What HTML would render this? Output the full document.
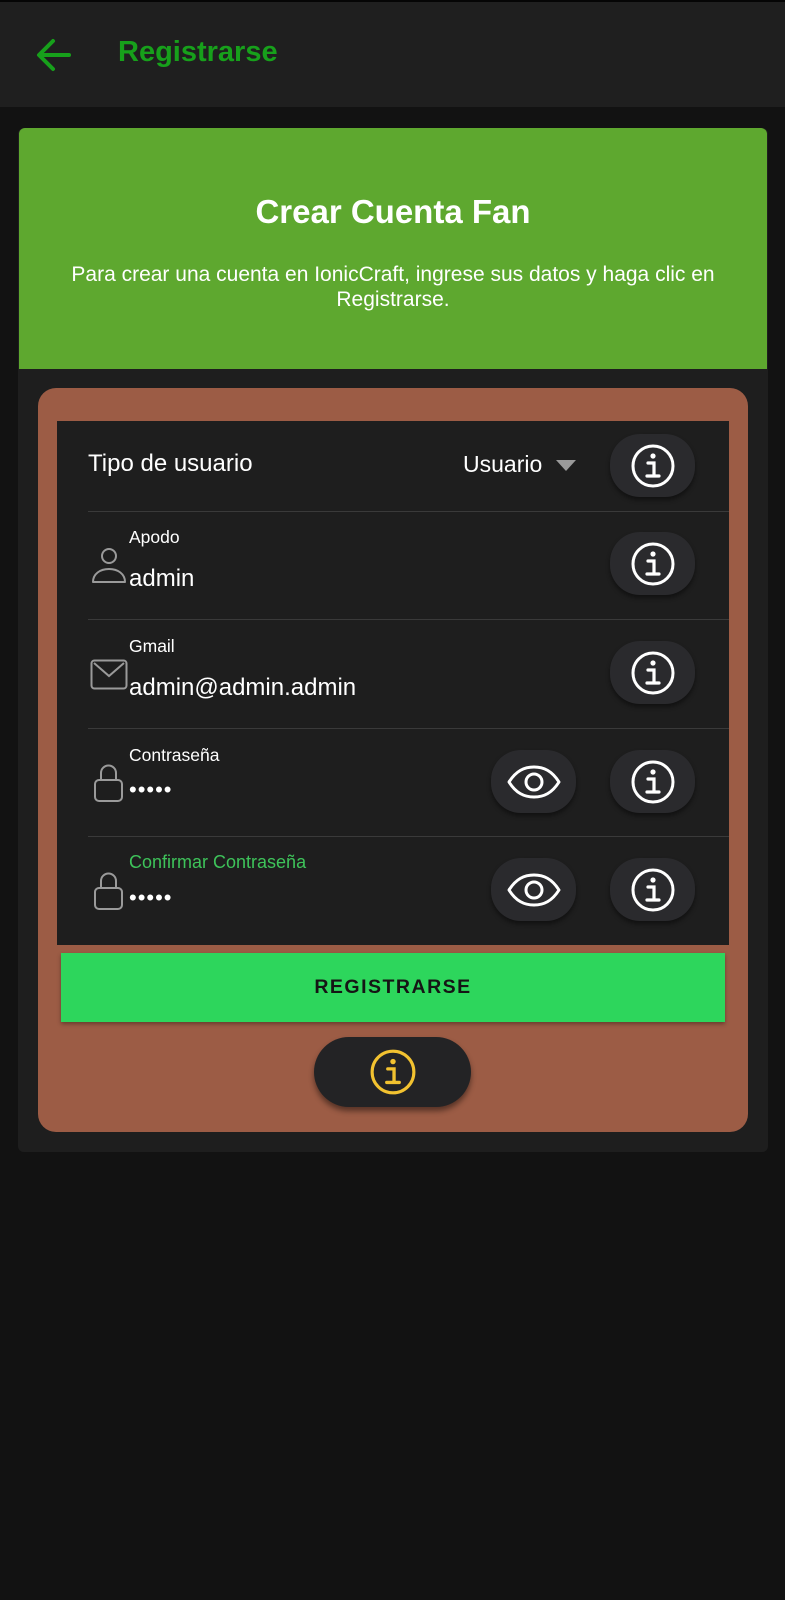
<!DOCTYPE html>
<html><head><meta charset="utf-8">
<style>
*{margin:0;padding:0;box-sizing:border-box}
body{width:785px;height:1600px;background:#121212;font-family:"Liberation Sans",sans-serif;position:relative;overflow:hidden;color:#fff}
.abs{position:absolute}
.hdr{left:0;top:0;width:785px;height:107px;background:#1f1f1f;border-top:2px solid #050505}
.btn{position:absolute;width:85px;height:63px;border-radius:30px;background:#2a2a2d;box-shadow:0 3px 5px rgba(0,0,0,.45);display:flex;align-items:center;justify-content:center}
.sep{position:absolute;left:88px;right:56px;height:1px;background:#3a3a3a}
.lbl{position:absolute;left:129px;font-size:17.5px;color:#fff}
.val{position:absolute;left:129px;font-size:24px;color:#fff}
.dots{position:absolute;left:129px;font-size:22px;letter-spacing:1px;color:#fff}
</style></head><body>
<div class="abs hdr"></div>
<svg class="abs" style="left:36px;top:38px" width="36" height="34" viewBox="0 0 36 34"><path d="M33 17H4M17 3L3 17l14 14" fill="none" stroke="#17a01b" stroke-width="4" stroke-linecap="round" stroke-linejoin="round"/></svg>
<div class="abs" style="left:118px;top:36px;font-size:29px;font-weight:bold;color:#17a01b">Registrarse</div>

<div class="abs" style="left:18px;top:128px;width:750px;height:1024px;background:#1e1e1e;border-radius:6px"></div>
<div class="abs" style="left:19px;top:128px;width:748px;height:241px;background:#5ea82f;border-radius:6px 6px 0 0"></div>
<div class="abs" style="left:19px;top:193px;width:748px;text-align:center;font-size:33px;font-weight:bold">Crear Cuenta Fan</div>
<div class="abs" style="left:19px;top:262px;width:748px;text-align:center;font-size:21px;line-height:25px">Para crear una cuenta en IonicCraft, ingrese sus datos y haga clic en<br>Registrarse.</div>

<div class="abs" style="left:38px;top:388px;width:710px;height:744px;background:#9c5c45;border-radius:18px"></div>
<div class="abs" style="left:57px;top:421px;width:672px;height:524px;background:#1e1e1e"></div>

<div class="abs" style="left:88px;top:450px;font-size:24px">Tipo de usuario</div>
<div class="abs" style="left:463px;top:451px;font-size:23px">Usuario</div>
<svg class="abs" style="left:556px;top:460px" width="20" height="12"><path d="M0 0h20L10 11z" fill="#9a9a9a"/></svg>
<div class="sep" style="top:511px"></div>
<div class="sep" style="top:619px"></div>
<div class="sep" style="top:728px"></div>
<div class="sep" style="top:836px"></div>

<div class="lbl" style="top:527px">Apodo</div>
<div class="val" style="top:565px">admin</div>
<svg class="abs" style="left:91px;top:547px" width="36" height="38" viewBox="0 0 36 38"><circle cx="18" cy="9" r="7" fill="none" stroke="#9a9a9a" stroke-width="2"/><path d="M2 35c0-8 7-13 16-13s16 5 16 13z" fill="none" stroke="#9a9a9a" stroke-width="2" stroke-linejoin="round"/></svg>

<div class="lbl" style="top:636px">Gmail</div>
<div class="val" style="top:674px">admin@admin.admin</div>
<svg class="abs" style="left:90px;top:659px" width="38" height="31" viewBox="0 0 38 31"><rect x="1.5" y="1.5" width="35" height="28" rx="3" fill="none" stroke="#9a9a9a" stroke-width="2"/><path d="M4 4l15 13L34 4" fill="none" stroke="#9a9a9a" stroke-width="2"/></svg>

<div class="lbl" style="top:745px">Contraseña</div>
<div class="dots" style="top:777px">•••••</div>
<svg class="abs" style="left:93px;top:763px" width="31" height="40" viewBox="0 0 31 40"><path d="M8 17V10a7.5 7.5 0 0 1 15 0v7" fill="none" stroke="#9a9a9a" stroke-width="2"/><rect x="2" y="17" width="27" height="21" rx="4" fill="none" stroke="#9a9a9a" stroke-width="2"/></svg>

<div class="lbl" style="top:852px;color:#3ec35a;font-size:18px">Confirmar Contraseña</div>
<div class="dots" style="top:885px">•••••</div>
<svg class="abs" style="left:93px;top:871px" width="31" height="40" viewBox="0 0 31 40"><path d="M8 17V10a7.5 7.5 0 0 1 15 0v7" fill="none" stroke="#9a9a9a" stroke-width="2"/><rect x="2" y="17" width="27" height="21" rx="4" fill="none" stroke="#9a9a9a" stroke-width="2"/></svg>

<div class="btn" style="left:610px;top:434px"><svg width="46" height="46" viewBox="0 0 46 46"><circle cx="23" cy="23" r="20" fill="none" stroke="#fff" stroke-width="3"/><circle cx="23" cy="13" r="2.6" fill="#fff"/><path d="M18 20h6v13M17 33h12" fill="none" stroke="#fff" stroke-width="3.2" stroke-linecap="round"/></svg></div>
<div class="btn" style="left:610px;top:532px"><svg width="46" height="46" viewBox="0 0 46 46"><circle cx="23" cy="23" r="20" fill="none" stroke="#fff" stroke-width="3"/><circle cx="23" cy="13" r="2.6" fill="#fff"/><path d="M18 20h6v13M17 33h12" fill="none" stroke="#fff" stroke-width="3.2" stroke-linecap="round"/></svg></div>
<div class="btn" style="left:610px;top:641px"><svg width="46" height="46" viewBox="0 0 46 46"><circle cx="23" cy="23" r="20" fill="none" stroke="#fff" stroke-width="3"/><circle cx="23" cy="13" r="2.6" fill="#fff"/><path d="M18 20h6v13M17 33h12" fill="none" stroke="#fff" stroke-width="3.2" stroke-linecap="round"/></svg></div>
<div class="btn" style="left:610px;top:750px"><svg width="46" height="46" viewBox="0 0 46 46"><circle cx="23" cy="23" r="20" fill="none" stroke="#fff" stroke-width="3"/><circle cx="23" cy="13" r="2.6" fill="#fff"/><path d="M18 20h6v13M17 33h12" fill="none" stroke="#fff" stroke-width="3.2" stroke-linecap="round"/></svg></div>
<div class="btn" style="left:610px;top:858px"><svg width="46" height="46" viewBox="0 0 46 46"><circle cx="23" cy="23" r="20" fill="none" stroke="#fff" stroke-width="3"/><circle cx="23" cy="13" r="2.6" fill="#fff"/><path d="M18 20h6v13M17 33h12" fill="none" stroke="#fff" stroke-width="3.2" stroke-linecap="round"/></svg></div>
<div class="btn" style="left:491px;top:750px"><svg width="56" height="36" viewBox="0 0 56 36"><path d="M3 18C10 7 18 3 28 3s18 4 25 15c-7 11-15 15-25 15S10 29 3 18z" fill="none" stroke="#fff" stroke-width="3" stroke-linejoin="round"/><circle cx="28" cy="18" r="8" fill="none" stroke="#fff" stroke-width="3"/></svg></div>
<div class="btn" style="left:491px;top:858px"><svg width="56" height="36" viewBox="0 0 56 36"><path d="M3 18C10 7 18 3 28 3s18 4 25 15c-7 11-15 15-25 15S10 29 3 18z" fill="none" stroke="#fff" stroke-width="3" stroke-linejoin="round"/><circle cx="28" cy="18" r="8" fill="none" stroke="#fff" stroke-width="3"/></svg></div>

<div class="abs" style="left:61px;top:953px;width:664px;height:69px;background:#2dd65c;box-shadow:0 2px 4px rgba(0,0,0,.35);display:flex;align-items:center;justify-content:center;font-size:19.5px;font-weight:bold;letter-spacing:1.5px;color:#151515">REGISTRARSE</div>

<div class="abs" style="left:314px;top:1037px;width:157px;height:70px;border-radius:35px;background:#232325;box-shadow:0 4px 6px rgba(0,0,0,.45);display:flex;align-items:center;justify-content:center"><svg width="48" height="48" viewBox="0 0 46 46"><circle cx="23" cy="23" r="20" fill="none" stroke="#f2c230" stroke-width="3"/><circle cx="23" cy="13" r="2.6" fill="#f2c230"/><path d="M18 20h6v13M17 33h12" fill="none" stroke="#f2c230" stroke-width="3.2" stroke-linecap="round"/></svg></div>
</body></html>
